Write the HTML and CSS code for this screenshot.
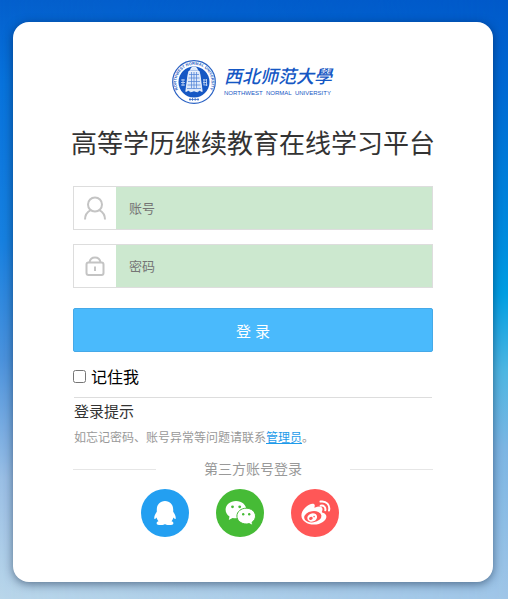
FILE: index.html
```html
<!DOCTYPE html>
<html lang="zh-CN">
<head>
<meta charset="utf-8">
<meta name="viewport" content="width=device-width, initial-scale=1">
<title>高等学历继续教育在线学习平台</title>
<link rel="stylesheet" href="styles.css">
</head>
<body>
<main class="card">
  <header class="brand">
    <svg class="seal" viewBox="0 0 44 44" aria-hidden="true">
      <defs>
        <path id="ring-top" d="M10 35A17.500 17.500 0 1 1 34 35"/>
      </defs>
      <circle cx="22" cy="22" r="21.300" fill="#fff" stroke="#2a62c4" stroke-width="1.200"/>
      <text class="seal-ring"><textPath href="#ring-top" startOffset="50%">NORTHWEST NORMAL UNIVERSITY</textPath></text>
      <circle cx="22" cy="22" r="15.500" fill="#1557c4"/>
      <path d="M18.500 10.500a3.500 3.500 0 0 1 7 0M17 11h10l1 4 2.200 16.500-2.700-1.200-2.200 1.500-3.300-1-3.300 1-2.200-1.500-2.700 1.200L16 15z" fill="#dce8fa" stroke="#fff" stroke-width=".8"/>
      <path d="M17 14.500h10M16.500 18h11M16 21.500h12M15.500 25h13M15 28.500h14M19.500 12v16M22 12v17M24.500 12v16" stroke="#4c80d4" stroke-width=".7" fill="none"/>
      <path d="M9 20h4M9 22.500h4M9 25h4M11 19v7M31 20h4M31 22.500h4M31.500 25h4M32 19v6M34.500 19v7" stroke="#bdd1f2" stroke-width=".9"/>
      <path d="M17 39.500h10M18 37.800v3M20.500 37.800v3M23.200 37.800v3M26 37.800v3" stroke="#3569c5" stroke-width=".8"/>
    </svg>
    <div class="school">
      <span class="school-cn">西北师范大學</span>
      <span class="school-en">NORTHWEST&nbsp; NORMAL&nbsp; UNIVERSITY</span>
    </div>
  </header>
  <h1 class="title">高等学历继续教育在线学习平台</h1>

  <form class="login">
    <div class="field">
      <label class="field-icon" for="account" aria-label="账号">
        <svg viewBox="0 0 24 24"><circle cx="12" cy="8.500" r="7"/><path d="M2 23.500c0-4.500 2.200-7.500 5.600-9.400M16.400 14.100c3.400 1.900 5.600 4.900 5.600 9.400"/></svg>
      </label>
      <input id="account" type="text" placeholder="账号">
    </div>
    <div class="field">
      <label class="field-icon" for="password" aria-label="密码">
        <svg viewBox="0 0 24 24"><rect x="3.500" y="8.500" width="17" height="12.500" rx="2"/><path d="M6.500 8.500c.5-3.200 2.500-5 5.500-5s5 1.800 5.500 5M12 12.500v4.500"/></svg>
      </label>
      <input id="password" type="password" placeholder="密码">
    </div>
    <button class="submit" type="submit">登 录</button>
    <div class="remember">
      <input id="remember" type="checkbox">
      <label for="remember">记住我</label>
    </div>
  </form>

  <section class="tips">
    <h2>登录提示</h2>
    <p>如忘记密码、账号异常等问题请联系<a href="#">管理员</a>。</p>
  </section>

  <div class="divider"><span>第三方账号登录</span></div>
  <nav class="social">
    <a class="qq" href="#" aria-label="QQ">
      <svg viewBox="0 0 48 48"><path fill="#fff" d="M24 12c-5 0-8.200 3.500-8.200 8.600v2.200c-1.500 2-2.800 4.600-2.500 6.700.2 1.200 1.400.3 2.200-1 .4 1.500 1.100 2.800 2 3.700-1.200.4-1.900 1.100-1.900 2 0 1.500 2.200 2 4.700 1.900 1.700 0 3-.5 3.700-1.200.7.700 2 1.200 3.700 1.200 2.500.1 4.700-.4 4.700-1.900 0-.9-.7-1.600-1.900-2 .9-.9 1.600-2.200 2-3.700.8 1.300 2 2.200 2.200 1 .3-2.100-1-4.700-2.500-6.700v-2.200C32.200 15.500 29 12 24 12z"/></svg>
    </a>
    <a class="wechat" href="#" aria-label="微信">
      <svg viewBox="0 0 48 48"><path fill="#fff" d="M20 12c-5.800 0-10.400 3.900-10.400 8.800 0 2.800 1.500 5.200 3.900 6.800L12.800 31l3.700-2.100c1.200.3 2.300.4 3.500.4 5.800 0 10.400-3.700 10.400-8.500S25.800 12 20 12z"/><path fill="#fff" stroke="#46bb36" stroke-width="1" d="M30.200 19.200c-5.200 0-9.300 3.500-9.300 7.900s4.100 7.900 9.300 7.900c1 0 2-.1 3-.4l3.700 2-.9-3.300c2.200-1.500 3.500-3.700 3.500-6.200 0-4.400-4.100-7.900-9.300-7.900z"/><g fill="#46bb36"><circle cx="16.500" cy="17.800" r="1.400"/><circle cx="23.700" cy="17.800" r="1.400"/><circle cx="27.200" cy="25.200" r="1.200"/><circle cx="33.200" cy="25.200" r="1.200"/></g></svg>
    </a>
    <a class="weibo" href="#" aria-label="微博">
      <svg viewBox="0 0 48 48"><path fill="#fff" d="M31.800 23.800c-.7-.2-1.200-.4-.8-1.300.8-1.900.6-3.400-.4-4.200-1.500-1.200-4.100-.7-6.500.3-.8.300-.8-.1-.6-.7 1.200-3.100-1.500-4.200-5.400-2.200-3.900 1.900-7.700 6.600-7.700 10.700 0 5.300 6.100 9.200 12.500 9.200 7.200 0 12.500-4.300 12.500-7.900 0-2-1.500-3.300-3.600-3.900z"/><ellipse cx="21.800" cy="27.700" rx="8.700" ry="5.600" fill="#ff5757" transform="rotate(-8 21.800 27.700)"/><ellipse cx="21.200" cy="28.500" rx="5" ry="4.100" fill="#fff" transform="rotate(-20 21.200 28.500)"/><ellipse cx="19.900" cy="29.400" rx="1.900" ry="1.500" fill="#ff5757" transform="rotate(-20 19.900 29.400)"/><circle cx="23.100" cy="27.600" r=".8" fill="#ff5757"/><path d="M29.700 16.700c3-.7 5.200 1.600 4.600 4.600M29.500 12.600c5.800-1 9.900 3.500 8.500 9" fill="none" stroke="#fff" stroke-width="2" stroke-linecap="round"/></svg>
    </a>
  </nav>
</main>
</body>
</html>
```
FILE: styles.css
```css
* { box-sizing: border-box; }

body {
  position: relative;
  min-height: 100vh;
  margin: 0;
  padding: 22px 15px 17px 13px;
  font-family: "Liberation Sans", "Noto Sans CJK SC", sans-serif;
  color: #333;
  background: linear-gradient(#0460cd 0%, #0873dc 14%, #1780e0 40%, #4b92dc 60%, #9abfe5 80%, #b9d6ea 100%);
}

body::before {
  content: "";
  position: absolute;
  inset: 0;
  background: linear-gradient(#0059c9 0%, #0068d3 14%, #008fdf 42%, #009ee2 49%, #4eb6e2 62%, #7cb5e3 75%, #9fc5e7 100%);
  mask-image: linear-gradient(to right, transparent, #000);
}

.card {
  position: relative;
  padding: 38px 60px 45px;
  border-radius: 16px;
  background: #fff;
  box-shadow: 0 2px 10px rgba(0, 20, 50, 0.5);
}

.brand {
  display: flex;
  align-items: center;
  justify-content: center;
  gap: 8px;
  height: 44px;
  padding-right: 2px;
}

.seal {
  width: 44px;
  height: 44px;
  overflow: visible;
}

.seal-ring {
  font: bold 4px "Liberation Sans", sans-serif;
  text-anchor: middle;
  fill: #2a62c4;
}

.school {
  display: flex;
  flex-direction: column;
  color: #1557c4;
  white-space: nowrap;
}

.school-cn {
  font-size: 18px;
  font-style: italic;
  font-weight: 500;
  line-height: 22px;
}

.school-en {
  font-size: 6px;
  line-height: 10px;
}

.title {
  display: flex;
  justify-content: center;
  margin: 22px 0 24px;
  font-size: 26px;
  font-weight: 400;
  line-height: 36px;
  white-space: nowrap;
}

.field {
  display: flex;
  height: 44px;
  margin-bottom: 14px;
  border: 1px solid #ddd;
}

.field-icon {
  display: flex;
  align-items: center;
  justify-content: center;
  width: 42px;
}

.field-icon svg {
  width: 24px;
  height: 24px;
  fill: none;
  stroke: #c4c4c4;
  stroke-width: 2;
}

.field input {
  flex: 1;
  min-width: 0;
  padding: 0 13px;
  border: 0;
  background: #cce8cf;
  font: 13px "Liberation Sans", "Noto Sans CJK SC", sans-serif;
}

.field input::placeholder { color: #757575; }

.submit {
  width: 100%;
  height: 44px;
  margin-top: 6px;
  border: 1px solid #45a9e8;
  border-radius: 2px;
  background: #4abafc;
  color: #fff;
  font: 15px "Liberation Sans", "Noto Sans CJK SC", sans-serif;
}

.remember {
  display: flex;
  align-items: center;
  gap: 5px;
  height: 24px;
  margin: 12px 0 9px;
  color: #000;
  font-size: 16px;
}

.remember input {
  width: 13px;
  height: 13px;
  margin: 0;
}

.tips {
  margin: 0 1px;
  border-top: 1px solid #ddd;
}

.tips h2 {
  margin: 3px 0 5px;
  font-size: 15px;
  font-weight: 400;
  line-height: 22px;
}

.tips p {
  margin: 0;
  color: #999;
  font-size: 12px;
  line-height: 20px;
}

.tips a { color: #1e9bea; }

.divider {
  display: flex;
  align-items: center;
  justify-content: space-between;
  margin: 11px 0 10px;
  color: #999;
  font-size: 14px;
  line-height: 20px;
}

.divider::before,
.divider::after {
  content: "";
  width: 23%;
  border-top: 1px solid #e6e6e6;
}

.social {
  display: flex;
  justify-content: center;
}

.social a {
  width: 48px;
  height: 48px;
  margin-right: 27px;
  border-radius: 50%;
}

.social svg { display: block; }

.qq { background: #239ff1; }
.wechat { background: #46bb36; }
.weibo { background: #ff5757; }
```
